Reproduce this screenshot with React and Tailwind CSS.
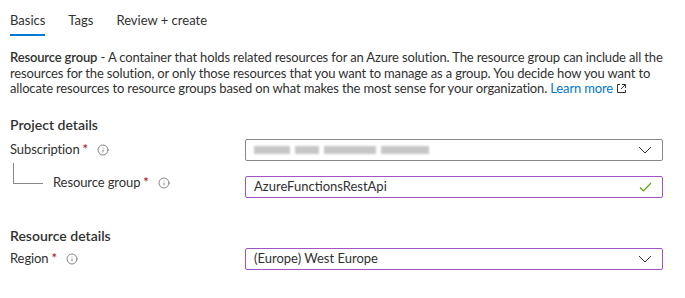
import React from "react";
import { Info } from "lucide-react";

const font = { fontFamily: '"Segoe UI", Lato, "Noto Sans", sans-serif' };

function Chevron() {
  return (
    <svg width="14" height="8" viewBox="0 0 14 8" className="text-[#323130]">
      <path d="M1 1l6 6 6-6" fill="none" stroke="currentColor" strokeWidth="1" />
    </svg>
  );
}

function Tick() {
  return (
    <svg width="13" height="10" viewBox="0 0 13 10" className="text-[#57a300]">
      <path d="M1 5.5l3.5 3.5L12 1" fill="none" stroke="currentColor" strokeWidth="1.1" />
    </svg>
  );
}

function Label({ children }) {
  return (
    <div className="flex items-center text-[13px] text-[#323130] tracking-[-0.1px]">
      <span>{children}</span>
      <span className="text-[#a4262c] ml-[3px] font-semibold">*</span>
      <span className="ml-[9px]">
        <Info size={12} strokeWidth={1.5} className="text-[#605e5c]" />
      </span>
    </div>
  );
}

function Field({ children, purple, right }) {
  return (
    <div
      className={
        "w-[418px] h-[22px] border rounded-[2px] flex items-center justify-between pl-2 pr-[10px] text-[13px] text-[#323130] " +
        (purple ? "border-[#a154c5]" : "border-[#8a8886]")
      }
    >
      <div className="flex-1">{children}</div>
      {right}
    </div>
  );
}

function Blurred() {
  return (
    <div className="flex gap-[5px] items-center blur-[1.2px] opacity-50">
      <span className="h-[8px] w-[36px] bg-[#8f8f8f]" />
      <span className="h-[8px] w-[24px] bg-[#8f8f8f]" />
      <span className="h-[8px] w-[52px] bg-[#8f8f8f]" />
      <span className="h-[8px] w-[48px] bg-[#8f8f8f]" />
    </div>
  );
}

export default function App() {
  return (
    <div className="bg-white w-[685px] h-[298px] px-[10px] text-[#323130]" style={font}>
      <div className="flex gap-[23px] text-[13px] pt-[10px]">
        <div className="flex flex-col">
          <span className="leading-[20px]">Basics</span>
          <span className="h-[2px] bg-[#0078d4] mt-[4px]" />
        </div>
        <span className="leading-[20px]">Tags</span>
        <span className="leading-[20px]">Review + create</span>
      </div>

      <p className="text-[13px] leading-[15.5px] mt-[14px] w-[675px] tracking-[-0.15px]">
        <span className="font-semibold">Resource group</span> - A container that holds related resources for an Azure solution. The resource group can include all the
        <br />
        resources for the solution, or only those resources that you want to manage as a group. You decide how you want to
        <br />
        allocate resources to resource groups based on what makes the most sense for your organization.{" "}
        <span className="text-[#0078d4]">Learn more</span>
        <svg width="11" height="11" viewBox="0 0 11 11" className="inline-block ml-[3px] -mt-[3px] text-[#323130]">
          <path d="M4 1.5H1.5v8h8V7" fill="none" stroke="currentColor" strokeWidth="1" />
          <path d="M6 1.5h3.5V5M9.5 1.5L5 6" fill="none" stroke="currentColor" strokeWidth="1" />
        </svg>
      </p>

      <div className="text-[14px] font-semibold mt-[19px] leading-[18px]">Project details</div>

      <div className="flex items-center mt-[5px]">
        <div className="w-[235px]">
          <Label>Subscription</Label>
        </div>
        <Field right={<Chevron />}>
          <Blurred />
        </Field>
      </div>

      <div className="flex items-start mt-[2px]">
        <div className="w-[235px] flex items-end">
          <div className="ml-[3px] w-[30px] h-[21px] border-l border-b border-[#8a8886]" />
          <div className="ml-[10px] translate-y-[9px]">
            <Label>Resource group</Label>
          </div>
        </div>
        <div className="mt-[13px]">
          <Field purple right={<Tick />}>
            AzureFunctionsRestApi
          </Field>
        </div>
      </div>

      <div className="text-[14px] font-semibold mt-[29px] leading-[18px]">Resource details</div>

      <div className="flex items-center mt-[3px]">
        <div className="w-[235px]">
          <Label>Region</Label>
        </div>
        <Field purple right={<Chevron />}>
          (Europe) West Europe
        </Field>
      </div>
    </div>
  );
}
